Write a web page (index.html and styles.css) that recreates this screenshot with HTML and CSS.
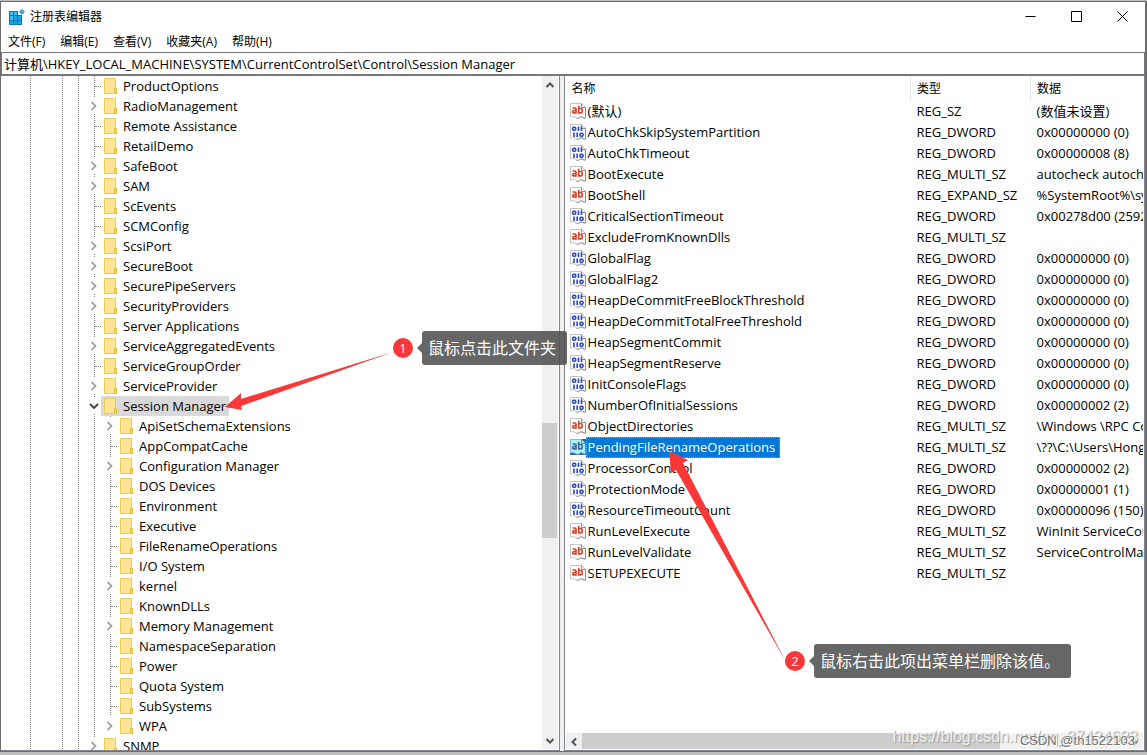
FILE: index.html
```
<!DOCTYPE html>
<html lang="zh-CN">
<head>
    <meta charset="UTF-8">
    <meta name="viewport" content="width=device-width, initial-scale=1.0">
    <title>注册表编辑器</title>
    <link rel="stylesheet" href="styles.css">
</head>
<body>
    <!-- Shared icons -->
    <svg class="sprite" aria-hidden="true">
        <symbol id="folder" viewBox="0 0 14 16">
            <path d="M.5 .5h11v10h1v5h-12z" fill="#ffe594" stroke="#eccb57"/>
            <path d="M10.500 15.500v-5h2v5z" fill="#ffe07a" stroke="#e3b93a"/>
        </symbol>
        <symbol id="closed" viewBox="0 0 8 10">
            <path d="M1.500 1l4 4-4 4" fill="none" stroke="#a6a6a6" stroke-width="1.800"/>
        </symbol>
        <symbol id="open" viewBox="0 0 10 8">
            <path d="M1 2l4 4 4-4" fill="none" stroke="#404040" stroke-width="1.800"/>
        </symbol>
        <symbol id="page" viewBox="0 0 16 16">
            <path d="M.5 .5h11l4 4v10.500c-2 1-3-2-5-1s-2 2-4 1-3-2-6-1z" fill="#fff" stroke="#c4c4c4"/>
            <path d="M11.500 .5v4h4v10.500c-2 1-3-2-5-1s-2 2-4 1" fill="none" stroke="#8e8e8e"/>
        </symbol>
        <symbol id="string" viewBox="0 0 16 16">
            <use href="#page"/>
            <g fill="none" stroke="#d2472a" stroke-width="1.700">
                <path d="M2.500 5h2.200q1.300 0 1.300 1.300v3.600h-2q-1.300 0-1.300-1.200t1.300-1.200h2"/>
                <path d="M8.700 2.800v7.100h2q1.500 0 1.500-1.500v-1.400q0-1.500-1.500-1.500h-2"/>
            </g>
        </symbol>
        <symbol id="binary" viewBox="0 0 16 16">
            <use href="#page"/>
            <g fill="none" stroke="#2547c8" stroke-width="1.600">
                <rect x="2.700" y="3.200" width="3" height="3" rx="1"/>
                <path d="M8.500 2.500v4.500M11.500 2.500v4.500M4 8.500v4.500M7.200 8.500v4.500"/>
                <rect x="10" y="9.300" width="3" height="3" rx="1"/>
            </g>
        </symbol>
    </svg>

    <div class="window">
        <header class="titlebar">
            <svg class="app-icon" viewBox="0 0 16 16" aria-hidden="true">
                <path d="M0 2h9v4h4v10H0z" fill="#0b78b5"/>
                <path d="M1 3h3v3H1zM5 3h3v3H5zM1 7h3v4H1z" fill="#38bdf0"/>
                <path d="M5 7h3v4H5zM9 7h3v4H9zM1 12h3v3H1zM5 12h3v3H5zM9 12h3v3H9z" fill="#19a5df"/>
                <path d="M13 .5l2.300 2.300-2.300 2.300-2.300-2.300z" fill="#45c3f2" stroke="#0b78b5"/>
            </svg>
            <span class="title">注册表编辑器</span>
            <button type="button" class="caption" aria-label="最小化"><svg viewBox="0 0 11 11"><path d="M.5 5.500h10"/></svg></button>
            <button type="button" class="caption" aria-label="最大化"><svg viewBox="0 0 11 11"><path d="M.5 .5h10v10h-10z"/></svg></button>
            <button type="button" class="caption" aria-label="关闭"><svg viewBox="0 0 11 11"><path d="M.5 .5l10 10M10.500 .5l-10 10"/></svg></button>
        </header>

        <nav class="menu">
            <button type="button">文件(F)</button>
            <button type="button">编辑(E)</button>
            <button type="button">查看(V)</button>
            <button type="button">收藏夹(A)</button>
            <button type="button">帮助(H)</button>
        </nav>

        <input class="address" type="text" aria-label="地址" value="计算机\HKEY_LOCAL_MACHINE\SYSTEM\CurrentControlSet\Control\Session Manager">

        <main class="panes">
            <section class="pane tree-pane">
                <ul class="tree">
                    <li class="leaf"><svg class="folder"><use href="#folder"/></svg><span>ProductOptions</span></li>
                    <li><button type="button" aria-label="展开"><svg><use href="#closed"/></svg></button><svg class="folder"><use href="#folder"/></svg><span>RadioManagement</span></li>
                    <li class="leaf"><svg class="folder"><use href="#folder"/></svg><span>Remote Assistance</span></li>
                    <li class="leaf"><svg class="folder"><use href="#folder"/></svg><span>RetailDemo</span></li>
                    <li><button type="button" aria-label="展开"><svg><use href="#closed"/></svg></button><svg class="folder"><use href="#folder"/></svg><span>SafeBoot</span></li>
                    <li><button type="button" aria-label="展开"><svg><use href="#closed"/></svg></button><svg class="folder"><use href="#folder"/></svg><span>SAM</span></li>
                    <li class="leaf"><svg class="folder"><use href="#folder"/></svg><span>ScEvents</span></li>
                    <li class="leaf"><svg class="folder"><use href="#folder"/></svg><span>SCMConfig</span></li>
                    <li><button type="button" aria-label="展开"><svg><use href="#closed"/></svg></button><svg class="folder"><use href="#folder"/></svg><span>ScsiPort</span></li>
                    <li><button type="button" aria-label="展开"><svg><use href="#closed"/></svg></button><svg class="folder"><use href="#folder"/></svg><span>SecureBoot</span></li>
                    <li><button type="button" aria-label="展开"><svg><use href="#closed"/></svg></button><svg class="folder"><use href="#folder"/></svg><span>SecurePipeServers</span></li>
                    <li><button type="button" aria-label="展开"><svg><use href="#closed"/></svg></button><svg class="folder"><use href="#folder"/></svg><span>SecurityProviders</span></li>
                    <li class="leaf"><svg class="folder"><use href="#folder"/></svg><span>Server Applications</span></li>
                    <li><button type="button" aria-label="展开"><svg><use href="#closed"/></svg></button><svg class="folder"><use href="#folder"/></svg><span>ServiceAggregatedEvents</span></li>
                    <li class="leaf"><svg class="folder"><use href="#folder"/></svg><span>ServiceGroupOrder</span></li>
                    <li><button type="button" aria-label="展开"><svg><use href="#closed"/></svg></button><svg class="folder"><use href="#folder"/></svg><span>ServiceProvider</span></li>
                    <li class="current"><button type="button" aria-label="折叠"><svg><use href="#open"/></svg></button><svg class="folder"><use href="#folder"/></svg><span>Session Manager</span>
                        <ul>
                            <li><button type="button" aria-label="展开"><svg><use href="#closed"/></svg></button><svg class="folder"><use href="#folder"/></svg><span>ApiSetSchemaExtensions</span></li>
                            <li class="leaf"><svg class="folder"><use href="#folder"/></svg><span>AppCompatCache</span></li>
                            <li><button type="button" aria-label="展开"><svg><use href="#closed"/></svg></button><svg class="folder"><use href="#folder"/></svg><span>Configuration Manager</span></li>
                            <li class="leaf"><svg class="folder"><use href="#folder"/></svg><span>DOS Devices</span></li>
                            <li class="leaf"><svg class="folder"><use href="#folder"/></svg><span>Environment</span></li>
                            <li class="leaf"><svg class="folder"><use href="#folder"/></svg><span>Executive</span></li>
                            <li class="leaf"><svg class="folder"><use href="#folder"/></svg><span>FileRenameOperations</span></li>
                            <li class="leaf"><svg class="folder"><use href="#folder"/></svg><span>I/O System</span></li>
                            <li><button type="button" aria-label="展开"><svg><use href="#closed"/></svg></button><svg class="folder"><use href="#folder"/></svg><span>kernel</span></li>
                            <li class="leaf"><svg class="folder"><use href="#folder"/></svg><span>KnownDLLs</span></li>
                            <li><button type="button" aria-label="展开"><svg><use href="#closed"/></svg></button><svg class="folder"><use href="#folder"/></svg><span>Memory Management</span></li>
                            <li class="leaf"><svg class="folder"><use href="#folder"/></svg><span>NamespaceSeparation</span></li>
                            <li class="leaf"><svg class="folder"><use href="#folder"/></svg><span>Power</span></li>
                            <li class="leaf"><svg class="folder"><use href="#folder"/></svg><span>Quota System</span></li>
                            <li class="leaf"><svg class="folder"><use href="#folder"/></svg><span>SubSystems</span></li>
                            <li><button type="button" aria-label="展开"><svg><use href="#closed"/></svg></button><svg class="folder"><use href="#folder"/></svg><span>WPA</span></li>
                        </ul>
                    </li>
                    <li><button type="button" aria-label="展开"><svg><use href="#closed"/></svg></button><svg class="folder"><use href="#folder"/></svg><span>SNMP</span></li>
                </ul>
                <div class="scroll vertical">
                    <button type="button" aria-label="向上滚动"><svg viewBox="0 0 10 10"><path d="M1.500 7l3.500-3.500 3.500 3.500"/></svg></button>
                    <div class="before"></div>
                    <div class="thumb"></div>
                    <div class="after"></div>
                    <button type="button" aria-label="向下滚动"><svg viewBox="0 0 10 10"><path d="M1.500 3l3.500 3.500 3.500-3.500"/></svg></button>
                </div>
            </section>

            <section class="pane value-pane">
                <div class="values">
                    <table>
                        <colgroup>
                            <col class="col-name">
                            <col class="col-type">
                            <col>
                        </colgroup>
                        <thead>
                            <tr><th>名称</th><th>类型</th><th>数据</th></tr>
                        </thead>
                        <tbody>
                            <tr><td><svg><use href="#string"/></svg><span>(默认)</span></td><td>REG_SZ</td><td>(数值未设置)</td></tr>
                            <tr><td><svg><use href="#binary"/></svg><span>AutoChkSkipSystemPartition</span></td><td>REG_DWORD</td><td>0x00000000 (0)</td></tr>
                            <tr><td><svg><use href="#binary"/></svg><span>AutoChkTimeout</span></td><td>REG_DWORD</td><td>0x00000008 (8)</td></tr>
                            <tr><td><svg><use href="#string"/></svg><span>BootExecute</span></td><td>REG_MULTI_SZ</td><td>autocheck autochk *</td></tr>
                            <tr><td><svg><use href="#string"/></svg><span>BootShell</span></td><td>REG_EXPAND_SZ</td><td>%SystemRoot%\system32\bootim.exe</td></tr>
                            <tr><td><svg><use href="#binary"/></svg><span>CriticalSectionTimeout</span></td><td>REG_DWORD</td><td>0x00278d00 (2592000)</td></tr>
                            <tr><td><svg><use href="#string"/></svg><span>ExcludeFromKnownDlls</span></td><td>REG_MULTI_SZ</td><td></td></tr>
                            <tr><td><svg><use href="#binary"/></svg><span>GlobalFlag</span></td><td>REG_DWORD</td><td>0x00000000 (0)</td></tr>
                            <tr><td><svg><use href="#binary"/></svg><span>GlobalFlag2</span></td><td>REG_DWORD</td><td>0x00000000 (0)</td></tr>
                            <tr><td><svg><use href="#binary"/></svg><span>HeapDeCommitFreeBlockThreshold</span></td><td>REG_DWORD</td><td>0x00000000 (0)</td></tr>
                            <tr><td><svg><use href="#binary"/></svg><span>HeapDeCommitTotalFreeThreshold</span></td><td>REG_DWORD</td><td>0x00000000 (0)</td></tr>
                            <tr><td><svg><use href="#binary"/></svg><span>HeapSegmentCommit</span></td><td>REG_DWORD</td><td>0x00000000 (0)</td></tr>
                            <tr><td><svg><use href="#binary"/></svg><span>HeapSegmentReserve</span></td><td>REG_DWORD</td><td>0x00000000 (0)</td></tr>
                            <tr><td><svg><use href="#binary"/></svg><span>InitConsoleFlags</span></td><td>REG_DWORD</td><td>0x00000000 (0)</td></tr>
                            <tr><td><svg><use href="#binary"/></svg><span>NumberOfInitialSessions</span></td><td>REG_DWORD</td><td>0x00000002 (2)</td></tr>
                            <tr><td><svg><use href="#string"/></svg><span>ObjectDirectories</span></td><td>REG_MULTI_SZ</td><td>\Windows \RPC Control</td></tr>
                            <tr class="selected"><td><svg><use href="#string"/></svg><span>PendingFileRenameOperations</span></td><td>REG_MULTI_SZ</td><td>\??\C:\Users\Hong</td></tr>
                            <tr><td><svg><use href="#binary"/></svg><span>ProcessorControl</span></td><td>REG_DWORD</td><td>0x00000002 (2)</td></tr>
                            <tr><td><svg><use href="#binary"/></svg><span>ProtectionMode</span></td><td>REG_DWORD</td><td>0x00000001 (1)</td></tr>
                            <tr><td><svg><use href="#binary"/></svg><span>ResourceTimeoutCount</span></td><td>REG_DWORD</td><td>0x00000096 (150)</td></tr>
                            <tr><td><svg><use href="#string"/></svg><span>RunLevelExecute</span></td><td>REG_MULTI_SZ</td><td>WinInit ServiceControlManager</td></tr>
                            <tr><td><svg><use href="#string"/></svg><span>RunLevelValidate</span></td><td>REG_MULTI_SZ</td><td>ServiceControlManager</td></tr>
                            <tr><td><svg><use href="#string"/></svg><span>SETUPEXECUTE</span></td><td>REG_MULTI_SZ</td><td></td></tr>
                        </tbody>
                    </table>
                </div>
                <div class="scroll horizontal">
                    <button type="button" aria-label="向左滚动"><svg viewBox="0 0 10 10"><path d="M7 1.500l-3.500 3.500 3.500 3.500"/></svg></button>
                    <div class="thumb"></div>
                    <div class="after"></div>
                    <button type="button" aria-label="向右滚动"><svg viewBox="0 0 10 10"><path d="M3 1.500l3.500 3.500-3.500 3.500"/></svg></button>
                </div>
            </section>
        </main>
    </div>

    <!-- Step notes drawn over the window -->
    <svg class="arrows" viewBox="0 0 1147 755" aria-hidden="true">
        <path d="M393 352L241 399l0-6-16 14 17 3-1-4z"/>
        <path d="M786 662L683 463l5-3-19-9 2 22 5-3z"/>
    </svg>
    <div class="note note-one"><b>1</b><p>鼠标点击此文件夹</p></div>
    <div class="note note-two"><b>2</b><p>鼠标右击此项出菜单栏删除该值。</p></div>
    <span class="mark mark-url">https://blog.csdn.net/qq_37434623</span>
    <span class="mark mark-author">CSDN @th1522103</span>
</body>
</html>
```
FILE: styles.css
```
*, *::before {
    box-sizing: border-box;
}
body {
    margin: 0;
    padding: 1px 0 3px;
    height: 100vh;
    position: relative;
    overflow: hidden;
    background: #bdbdbd;
    color: #000;
    font: 13px/20px "Open Sans", "Noto Sans CJK SC", sans-serif;
}
button {
    margin: 0;
    padding: 0;
    border: 0;
    background: none;
    color: inherit;
    font: inherit;
}
ul {
    margin: 0;
    padding: 0;
    list-style: none;
}
.sprite {
    position: absolute;
    width: 0;
    height: 0;
}
.window {
    height: 100%;
    display: flex;
    flex-direction: column;
    border: 1px solid #6d6d70;
    border-right-width: 2px;
    background: #fff;
}

/* title and menu */
.titlebar {
    display: flex;
    align-items: center;
    height: 29px;
    padding-left: 8px;
    font-size: 12px;
}
.app-icon {
    width: 16px;
    height: 16px;
    margin-right: 5px;
}
.title {
    flex: 1;
}
.caption {
    width: 46px;
    height: 28px;
}
.caption svg {
    display: block;
    width: 11px;
    height: 11px;
    margin: auto;
    fill: none;
    stroke: #000;
}
.menu {
    display: flex;
    gap: 15px;
    height: 21px;
    padding-left: 7px;
    font-size: 12px;
}
.address {
    height: 24px;
    padding: 0 2px 1px;
    border: 1px solid #77777d;
    border-bottom-width: 2px;
    background: #fff;
    font: inherit;
}

/* panes */
.panes {
    flex: 1;
    min-height: 0;
    display: flex;
    gap: 4px;
    background: #f0f0f0;
}
.pane {
    display: flex;
    min-width: 0;
    overflow: hidden;
    background: #fff;
    border: 1px solid #828790;
    border-top: 0;
}
.tree-pane {
    flex: 559;
    padding: 0 1px 1px;
    border-left: 0;
}
.value-pane {
    flex: 581;
    flex-direction: column;
    padding: 0 1px 1px;
}

/* key tree */
.tree {
    --dots: repeating-linear-gradient(#808080 0 1px, transparent 1px 2px);
    flex: 1;
    padding-left: 85px;
    background:
        var(--dots) 28px 0 / 1px 100% no-repeat,
        var(--dots) 60px 0 / 1px 100% no-repeat,
        var(--dots) 76px 0 / 1px 100% no-repeat;
}
.tree li {
    display: flex;
    flex-wrap: wrap;
    align-items: center;
    white-space: nowrap;
    background: var(--dots) 7px 0 / 1px 100% no-repeat;
}
.tree li.leaf::before {
    content: "";
    width: 6px;
    margin: 0 3px 0 8px;
    border-top: 1px dotted #808080;
}
.tree li button {
    width: 14px;
    height: 16px;
    margin-right: 3px;
    background: #fff;
}
.tree li button svg {
    display: block;
    width: 10px;
    height: 10px;
    margin: auto;
}
.tree .folder {
    width: 14px;
    height: 16px;
}
.tree span {
    padding: 0 3px 0 5px;
}
.tree .current > button {
    margin-right: 0;
}
.tree .current > .folder {
    width: 17px;
    height: 20px;
    padding: 2px 0 2px 3px;
    background: #d9d9d9;
}
.tree .current > span {
    background: #d9d9d9;
}
.tree li ul {
    flex: 0 0 100%;
    padding-left: 16px;
}
.tree li ul li:last-child {
    background: none;
}

/* scroll bars */
.scroll {
    display: flex;
    background: #f0f0f0;
}
.scroll button {
    flex: none;
    width: 16px;
    height: 17px;
}
.scroll svg {
    display: block;
    width: 10px;
    height: 10px;
    margin: auto;
    fill: none;
    stroke: #555;
    stroke-width: 2;
}
.scroll .thumb {
    background: #cdcdcd;
}
.vertical {
    flex-direction: column;
}
.vertical .before {
    flex: 330;
}
.vertical .thumb {
    flex: 115;
    width: 15px;
}
.vertical .after {
    flex: 194;
}
.horizontal {
    height: 16px;
}
.horizontal .thumb {
    flex: 418;
}
.horizontal .after {
    flex: 127;
}

/* value list */
.values {
    flex: 1;
    min-height: 0;
    overflow: hidden;
}
table {
    width: 100%;
    table-layout: fixed;
    border-collapse: collapse;
}
.col-name {
    width: 345px;
}
.col-type {
    width: 120px;
}
th, td {
    height: 21px;
    padding: 0 0 0 6px;
    overflow: hidden;
    line-height: 21px;
    text-align: left;
    white-space: nowrap;
}
th {
    height: 25px;
    font-size: 12px;
    font-weight: normal;
}
th + th {
    border-left: 1px solid #e5e5e5;
}
td:first-child {
    display: flex;
    align-items: flex-start;
    padding-left: 4px;
}
td svg {
    flex: none;
    width: 16px;
    height: 16px;
    margin-top: 2px;
}
td span {
    padding: 0 5px 0 2px;
}
.selected span {
    background: #0078d7;
    color: #fff;
    outline: 1px dotted #e8954a;
    outline-offset: -1px;
}
.selected svg {
    background: #fff;
    box-shadow: inset 0 0 0 16px #0078d7;
    filter: brightness(0.75) sepia(1) hue-rotate(170deg) saturate(2);
}

/* step notes */
.arrows {
    position: absolute;
    top: 0;
    left: 0;
    width: 1147px;
    height: 755px;
    fill: #fb3838;
}
.note {
    position: absolute;
    display: flex;
    align-items: center;
    gap: 9px;
    color: #fff;
}
.note-one {
    left: 393px;
    top: 331px;
}
.note-two {
    left: 785px;
    top: 644px;
}
.note b {
    width: 20px;
    border-radius: 50%;
    background: #fb3838;
    font-weight: normal;
    text-align: center;
}
.note p {
    position: relative;
    margin: 0;
    padding: 0 11px 0 6px;
    border-radius: 3px;
    background: rgba(75, 75, 75, 0.85);
    font-size: 16px;
    line-height: 34px;
}
.note p::before {
    content: "";
    position: absolute;
    left: -5px;
    top: 12px;
    border: 5px solid transparent;
    border-left: 0;
    border-right-color: rgba(75, 75, 75, 0.85);
}
.mark {
    position: absolute;
    white-space: nowrap;
    font-family: "Liberation Sans", Arial, sans-serif;
}
.mark-url {
    right: 9px;
    bottom: 8px;
    color: rgba(255, 255, 255, 0.8);
    font-size: 16px;
    text-shadow: 1px 1px 1px #999;
}
.mark-author {
    right: 12px;
    bottom: 4px;
    color: #777;
    font-size: 13px;
    text-shadow: 1px 1px 0 #fff;
}
```
